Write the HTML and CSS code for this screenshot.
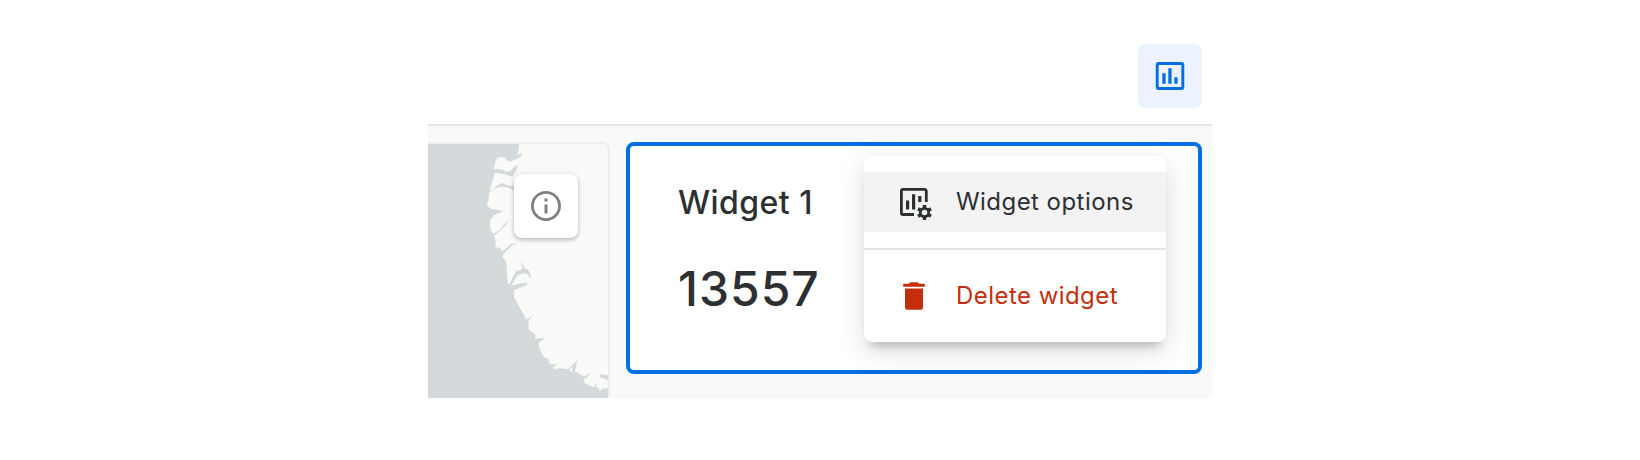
FILE: index.html
```html
<!DOCTYPE html>
<html lang="en">
<head>
<meta charset="utf-8">
<title>Widget options</title>
<link rel="stylesheet" href="styles.css">
</head>
<body>
<main class="app">
  <header class="toolbar">
    <button class="tool" aria-label="Widgets">
      <svg width="36" height="36" viewBox="0 0 36 36">
        <rect x="5.200" y="5.500" width="25.600" height="25" rx="1.600" fill="none" stroke="currentColor" stroke-width="2.900"/>
        <path d="M10.300 15.200h3.300v10.500h-3.300zM16.300 10.200h3.300v15.500h-3.300zM22.300 19.200h3.300v6.500h-3.300z" fill="currentColor"/>
      </svg>
    </button>
  </header>
  <div class="content">
    <section class="map">
      <svg class="coast" width="180" height="254" viewBox="428 144 180 254">
        <path class="land" d="M519 144L518.500 150L517.500 155L522 153L521 156.500L515.500 159.500L510 161.500L506.500 160L504 157.200L498 157.500L496 160L493.500 169L502 169.500L506 171.500L510.500 171L514 167L518 165L516.500 170L512.500 177L505.500 174.500L495 172.700L492 183L489.300 191L492.500 190L497 185.500L503 183L508 185.500L514 186V190L507 187.500L502 186.500L496 188L489 193L488.500 200L487 203.500L488 206.500L491.500 209L497 209.500L503.500 211.500L499 213L494.500 215L491.500 218.500L490 222.500L490.500 230.500L493 232.500L493.500 234L500 229.500L505 223.500L509.500 219.500L505.500 225.500L499 231.500L494 236L496 241L495 247L500 248L502.500 251.500L511 243.800L518.500 243.500L512 245.500L503.500 254L502.500 257L506 261L508 284L509.500 284L516 271L518 270.500L522 269.500L522 266.500L520.500 259L524.500 268.500L528 269.500L530.500 274L531 279L528 274.500L523.500 273L517.500 275.500L511.500 285.500L520 283.500L527 282.500L527.500 285L514 290V297L518 304.500L526.500 319.500L533 315L528.500 321V329.500L535.500 334.500L535 339L539 338.500L545 338L538.500 343L540 350.500L543.500 356.500L548.500 359.500L550 364L557 364.500L552.500 368L556 369.500L558 368L568 369L571 366L577.500 360L575 371.500L579 373.500L584 376.500L590.500 372.500L588 376.500L584 379L584.500 383L594 387.500L597 381.500L596 387L600 389L608 388V381L606 379L600 377.500L600.500 374L608 375.500V144Z"/>
        <path class="land" d="M569 370L572.500 366.500L572 372ZM598 390L602 388L601 391Z"/>
      </svg>
      <button class="info" aria-label="Information">
        <svg width="36" height="36" viewBox="0 0 24 24" fill="currentColor"><path d="M11 7h2v2h-2zM11 11h2v6h-2zM12 2C6.480 2 2 6.480 2 12s4.480 10 10 10 10-4.480 10-10S17.520 2 12 2zm0 18.100c-4.470 0-8.100-3.630-8.100-8.100S7.530 3.900 12 3.900s8.100 3.630 8.100 8.100-3.630 8.100-8.100 8.100z"/></svg>
      </button>
    </section>
    <section class="widget">
      <h2 class="title">Widget 1</h2>
      <p class="value">13557</p>
      <div class="menu" role="menu">
        <div class="item active" role="menuitem">
          <svg class="icon" width="36" height="36" viewBox="0 0 36 36">
            <path d="M18 30.500H7a1.600 1.600 0 0 1-1.600-1.600V7A1.600 1.600 0 0 1 7 5.400H28.700A1.600 1.600 0 0 1 30.300 7V18" fill="none" stroke="currentColor" stroke-width="2.800"/>
            <path d="M10 16.500h3.200v9H10zM16 10.300h3.200v15.200H16zM22.200 12h3.200v6h-3.200z" fill="currentColor"/>
            <g fill="none" stroke="currentColor">
              <circle cx="28.500" cy="28.500" r="4.200" stroke-width="2.800"/>
              <path stroke-width="3.400" d="M28.500 21v3.500M28.500 32.500V36M22 24.750l3 1.750M32 30.500l3 1.750M22 32.250l3-1.750M32 26.500l3-1.750"/>
            </g>
          </svg>
          <span>Widget options</span>
        </div>
        <div class="divider"></div>
        <div class="item danger" role="menuitem">
          <svg class="icon" width="36" height="36" viewBox="0 0 36 36" fill="currentColor"><path d="M9 10.500h18v18.400a2.800 2.800 0 0 1-2.800 2.800H11.800A2.800 2.800 0 0 1 9 28.900zM7.200 5.700h5.600l1.600-1.500h7.200l1.600 1.500h5.600v3.100H7.200z"/></svg>
          <span>Delete widget</span>
        </div>
      </div>
    </section>
  </div>
</main>
</body>
</html>
```
FILE: styles.css
```css
* {
  box-sizing: border-box;
}

body {
  margin: 0;
  background: #fff;
  color: #2c3032;
  font-family: Inter, sans-serif;
}

.app {
  width: 784px;
  height: 398px;
  margin-left: 428px;
}

.toolbar {
  display: flex;
  justify-content: flex-end;
  height: 126px;
  padding: 44px 10px 0 0;
  border-bottom: 2px solid #e4e4e4;
}

button {
  display: grid;
  place-items: center;
  width: 64px;
  height: 64px;
  padding: 0;
  border: 0;
  border-radius: 8px;
}

svg {
  display: block;
}

.tool {
  background: #ecf3fe;
  color: #036fe2;
}

.content {
  display: flex;
  gap: 16px;
  height: 272px;
  padding: 16px 10px 0 0;
  background: #f8faf9;
}

.map {
  position: relative;
  width: 182px;
  height: 256px;
  overflow: hidden;
  border: solid #eceeef;
  border-width: 2px 2px 0 0;
  border-radius: 0 8px 0 0;
  background: #d4dadc;
}

.land {
  fill: #fafaf8;
}

.info {
  position: absolute;
  top: 30px;
  right: 30px;
  background: #fff;
  color: #808080;
  box-shadow: 0 2px 4px rgba(0, 0, 0, .24), 0 0 8px rgba(0, 0, 0, .06);
}

.widget {
  position: relative;
  width: 576px;
  height: 232px;
  padding: 38px 48px;
  border: 4px solid #036fe2;
  border-radius: 8px;
  background: #fff;
}

.title {
  margin: 0;
  font-size: 32px;
  font-weight: 450;
  line-height: 38px;
  letter-spacing: .45px;
}

.value {
  margin: 38px 0 0;
  font-size: 48px;
  font-weight: 450;
  line-height: 58px;
  letter-spacing: 1px;
}

.menu {
  position: absolute;
  top: 10px;
  left: 234px;
  width: 302px;
  height: 186px;
  padding: 16px 0;
  border-radius: 8px;
  background: #fff;
  box-shadow: 0 10px 10px -6px rgba(0, 0, 0, .2), 0 8px 28px rgba(0, 0, 0, .14);
}

.item {
  display: flex;
  align-items: center;
  gap: 24px;
  height: 60px;
  padding-left: 32px;
  font-size: 24px;
  font-weight: 430;
  letter-spacing: .45px;
  white-space: nowrap;
}

.item span {
  padding-bottom: 2px;
}

.active {
  background: #f3f3f3;
}

.danger {
  color: #c42e0b;
}

.icon {
  flex: none;
}

.divider {
  height: 2px;
  margin: 16px 0;
  background: #e4e4e4;
}
```
